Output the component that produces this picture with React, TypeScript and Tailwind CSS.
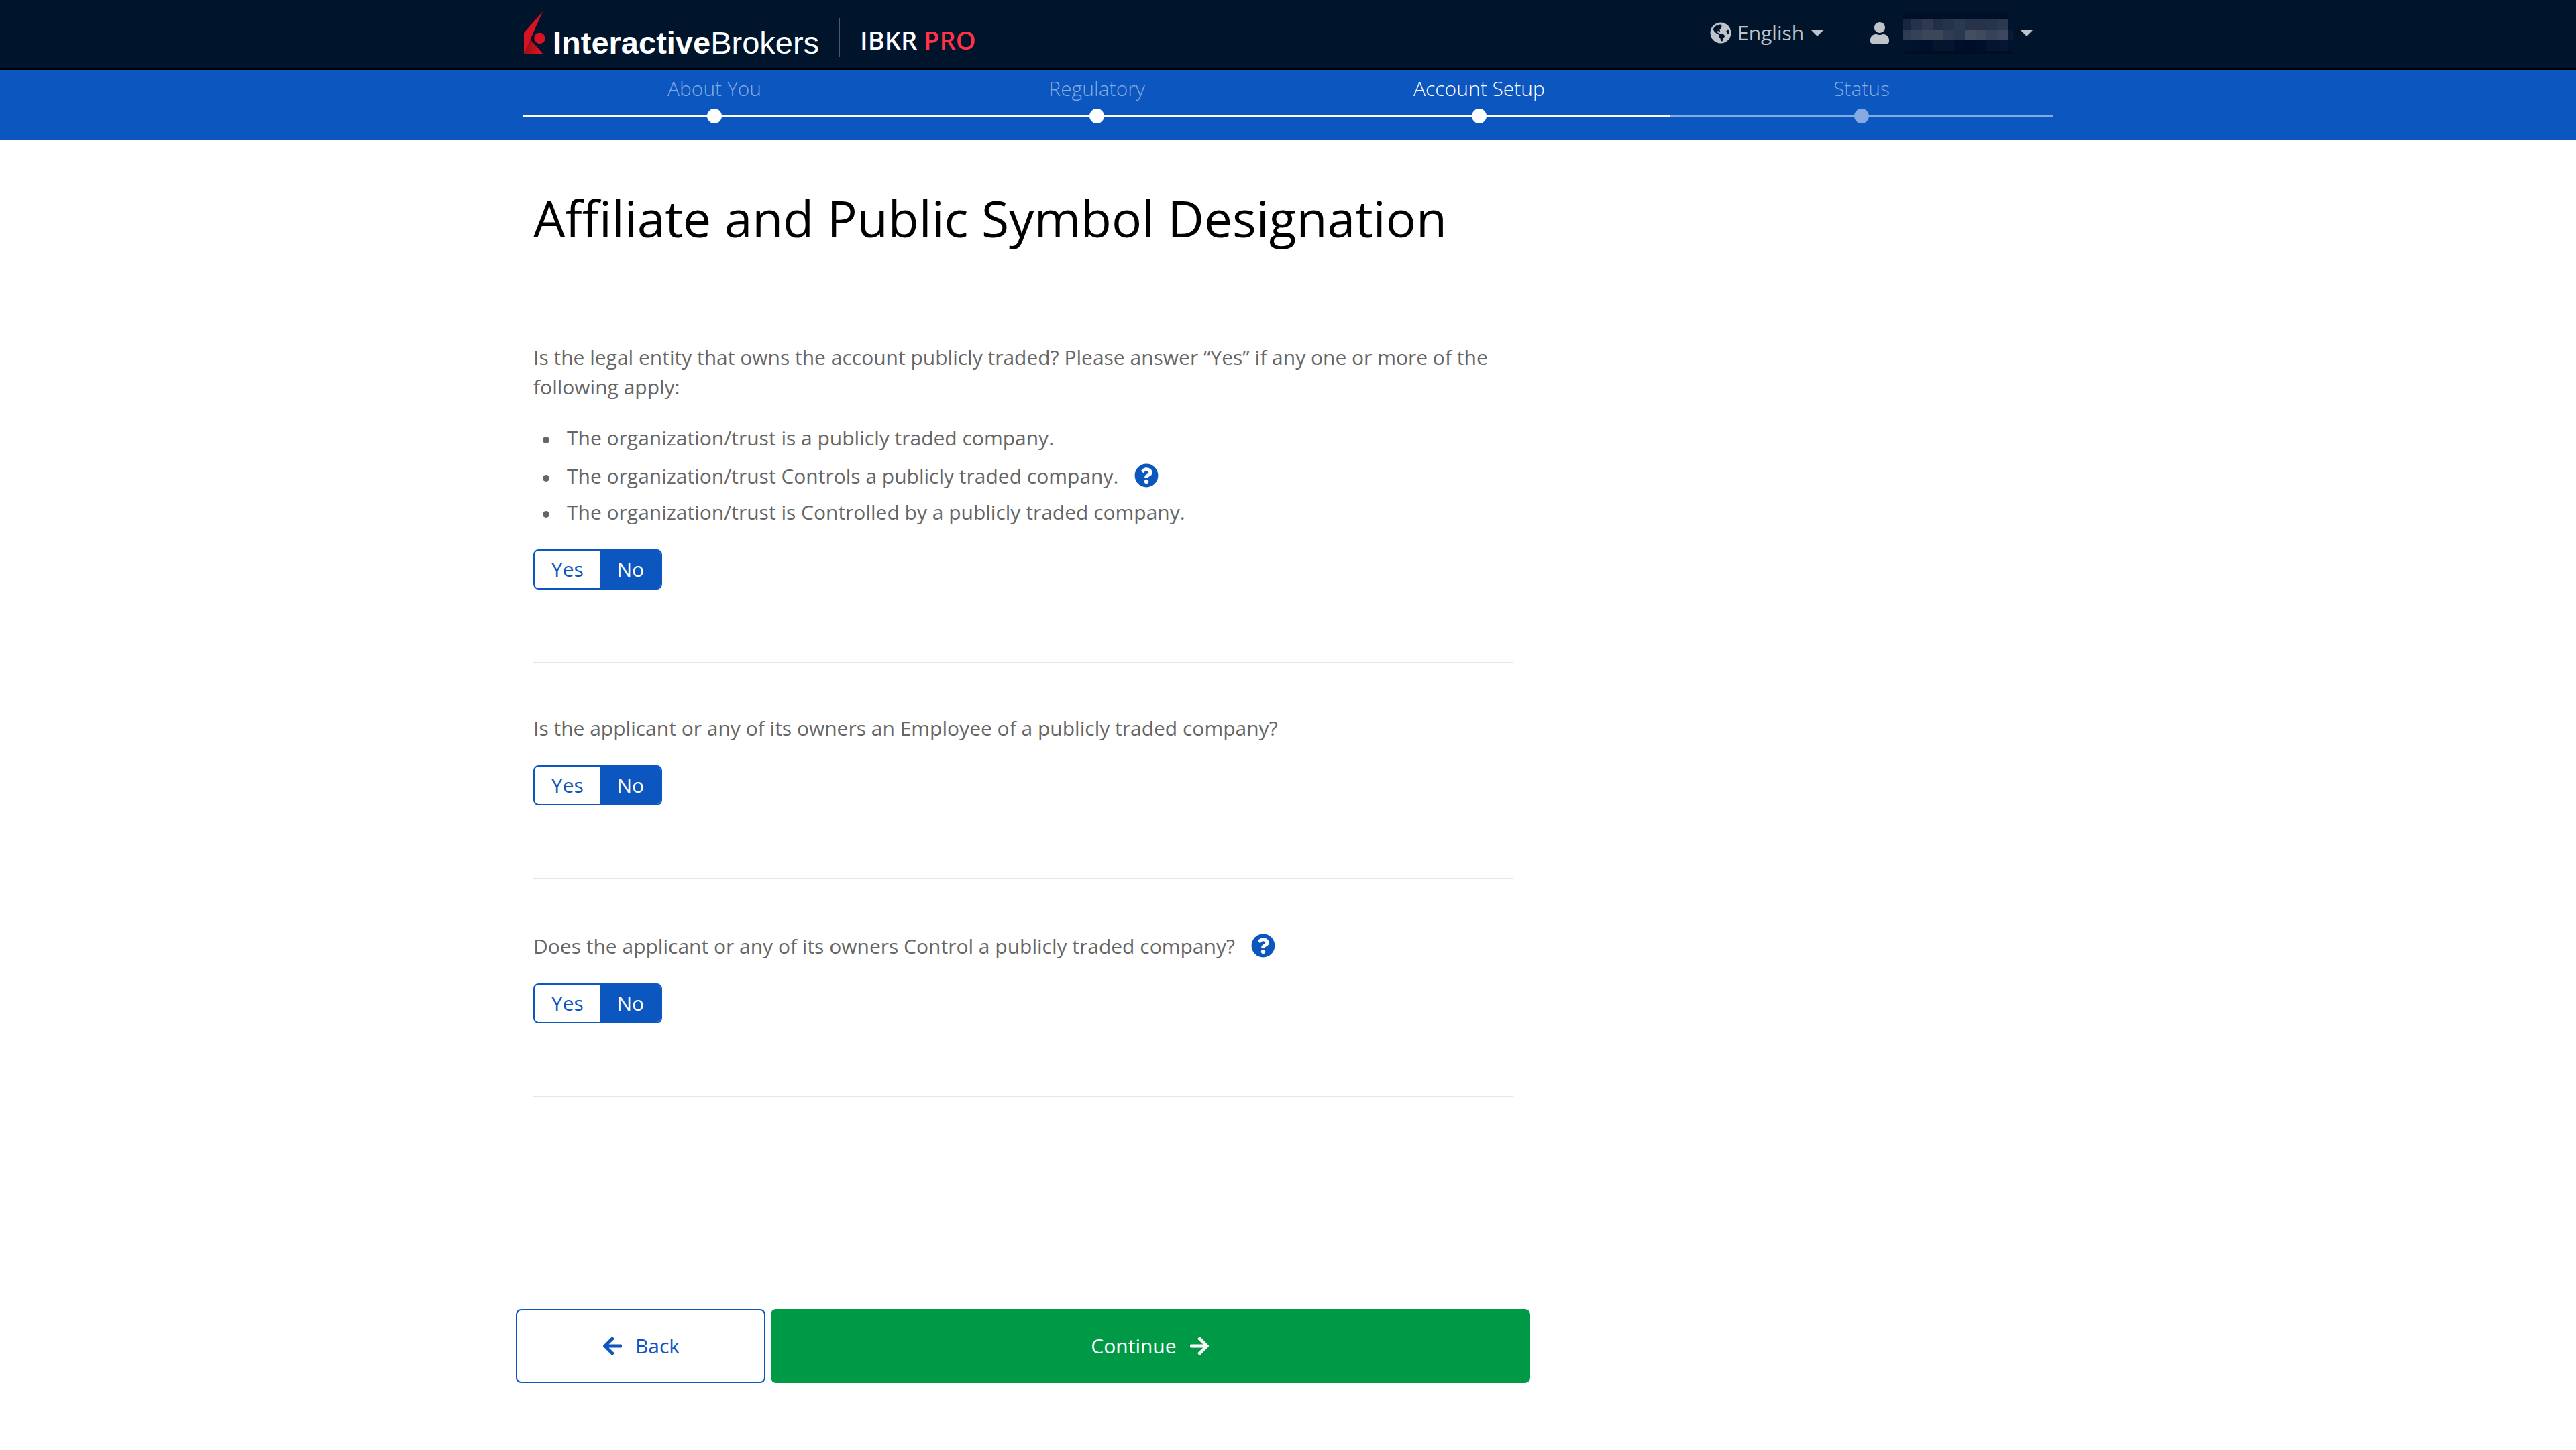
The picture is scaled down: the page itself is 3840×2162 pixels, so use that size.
import { useId, useState } from "react";
import { FaArrowLeft, FaArrowRight, FaGlobeAmericas, FaQuestionCircle, FaUser } from "react-icons/fa";

const steps = [
  { label: "About You", current: false, reached: true },
  { label: "Regulatory", current: false, reached: true },
  { label: "Account Setup", current: true, reached: true },
  { label: "Status", current: false, reached: false },
];

const maskColumns = [0, 12, 28, 44, 60, 76, 92, 108, 124, 140, 156, 164];
const maskRows = [
  { y: 10, h: 16, fills: ["#1a2640", "#24324a", "#2f3950", "#242d46", "#25344b", "#2a3a50", "#283249", "#28324a", "#26354b", "#2a394e", "#03142f"] },
  { y: 26, h: 16, fills: ["#303a51", "#344259", "#3a475b", "#3c4859", "#2f3c53", "#2a394f", "#434f60", "#3f4b5c", "#364259", "#3c465f", "#0a1a35"] },
  { y: 42, h: 16, fills: ["#01132f", "#00112e", "#00102c", "#04172f", "#04162f", "#00102c", "#000d2a", "#000f2c", "#041530", "#041631", "#01132e"] },
];

function MaskedName() {
  return (
    <svg className="h-[62px] w-[164px]" viewBox="0 0 164 62" shapeRendering="crispEdges" aria-hidden="true">
      <rect x="0" y="0" width="156" height="10" fill="#001029" />
      {maskRows.map((row) =>
        row.fills.map((fill, i) => (
          <rect key={`${row.y}-${i}`} x={maskColumns[i]} y={row.y} width={maskColumns[i + 1] - maskColumns[i]} height={row.h} fill={fill} />
        )),
      )}
      <rect x="0" y="58" width="164" height="4" fill="#000e1f" />
    </svg>
  );
}

function Caret() {
  return (
    <svg className="h-[9px] w-[18px] shrink-0" viewBox="0 0 18 9" aria-hidden="true">
      <path d="M0 0h18L9 9z" fill="#bfc4cb" />
    </svg>
  );
}

function LogoMark() {
  return (
    <svg className="h-[63px] w-[32px]" viewBox="0 0 32 63" aria-hidden="true">
      <defs>
        <linearGradient id="mark-shade" x1="0" y1="0.6" x2="0.75" y2="0.85">
          <stop offset="0" stopColor="#8e0f18" />
          <stop offset="1" stopColor="#d81222" />
        </linearGradient>
      </defs>
      <path d="M0 63 9 41 28 63z" fill="url(#mark-shade)" />
      <path d="M0 32 28 0 9 43 0 63z" fill="#d81222" />
      <circle cx="23.5" cy="40" r="8.3" fill="#d81222" />
    </svg>
  );
}

function Help({ label }: { label: string }) {
  return (
    <button type="button" aria-label={label} className="ml-6 flex h-[47px] shrink-0 items-center text-[#0c56c0]">
      <FaQuestionCircle className="size-9" />
    </button>
  );
}

function YesNo({ labelledBy }: { labelledBy: string }) {
  const [value, setValue] = useState("No");
  const name = useId();
  return (
    <div role="radiogroup" aria-labelledby={labelledBy} className="flex h-[60px] w-[192px] overflow-hidden rounded-lg border-2 border-[#0c56c0]">
      {["Yes", "No"].map((option) => (
        <label
          key={option}
          className="flex grow cursor-pointer items-center justify-center text-[#0c56c0] has-checked:bg-[#0c56c0] has-checked:text-white"
        >
          <input type="radio" name={name} value={option} checked={value === option} onChange={() => setValue(option)} className="sr-only" />
          {option}
        </label>
      ))}
    </div>
  );
}

const conditions = [
  { text: "The organization/trust is a publicly traded company.", help: false },
  { text: "The organization/trust Controls a publicly traded company.", help: true },
  { text: "The organization/trust is Controlled by a publicly traded company.", help: false },
];

export default function App() {
  return (
    <div className="min-h-screen bg-white font-['Open_Sans',sans-serif] text-[30px] leading-[44px] text-[#666666]">
      <header className="border-b-2 border-black bg-[#00142c]">
        <div className="mx-auto flex h-[102px] max-w-[2280px] items-start justify-between">
          <div className="flex items-start">
            <a href="#home" className="flex items-end gap-[11px] pt-[17px] pl-px">
              <LogoMark />
              <span className="font-['Liberation_Sans',sans-serif] text-[47px] leading-[32px] text-white">
                <b>Interactive</b>Brokers
              </span>
            </a>
            <span className="mt-[27px] ml-[29px] h-[58px] w-0.5 bg-[#4d5a6b]" />
            <span className="mt-[27px] ml-[30px] text-[38px] leading-[64px] font-semibold text-white">
              IBKR <span className="text-[#ff3347]">PRO</span>
            </span>
          </div>
          <div className="flex gap-[68px] pt-[27px] pr-[30px] text-[#bfc4cb]">
            <div className="flex items-center">
              <FaGlobeAmericas className="mr-[9px] size-8" aria-hidden="true" />
              <select aria-label="Language" className="mr-2.5 appearance-none bg-transparent leading-[44px]">
                <option>English</option>
              </select>
              <Caret />
            </div>
            <button type="button" aria-haspopup="menu" aria-label="Account menu" className="flex h-[44px] items-center">
              <FaUser className="mr-[19px] size-8" />
              <MaskedName />
              <span className="ml-[11px]">
                <Caret />
              </span>
            </button>
          </div>
        </div>
      </header>

      <nav aria-label="Progress" className="bg-[#0c56c0]">
        <ol className="mx-auto grid max-w-[2280px] grid-cols-4 pt-1.5 pb-6">
          {steps.map((step) => (
            <li key={step.label} aria-current={step.current ? "step" : undefined}>
              <p className={step.current ? "text-center font-light text-white" : "text-center font-light text-[#85aae0]"}>{step.label}</p>
              <div className={step.reached ? "mt-2 flex items-center text-white" : "mt-2 flex items-center text-[#85aae0]"}>
                <span className="h-1 grow bg-current" />
                <span className="size-[22px] rounded-full bg-current" />
                <span className="h-1 grow bg-current" />
              </div>
            </li>
          ))}
        </ol>
      </nav>

      <main className="mx-auto max-w-[2302px] pb-[100px]">
        <div className="max-w-[1512px]">
          <div className="px-[26px]">
            <h1 className="pt-[69px] text-[75px] leading-[96px] text-black">Affiliate and Public Symbol Designation</h1>

            <section className="border-b-2 border-[#e5e5e5] pt-[138px] pb-[108px]">
              <p id="q-entity">
                Is the legal entity that owns the account publicly traded? Please answer “Yes” if any one or more of the following apply:
              </p>
              <ul className="mt-8 flex flex-col gap-2.5 pl-3.5">
                {conditions.map((c) => (
                  <li key={c.text} className="flex items-end">
                    <span className="mr-[26px] mb-3.5 size-2.5 rounded-full bg-[#666666]" />
                    {c.text}
                    {c.help && <Help label="What does Controls mean?" />}
                  </li>
                ))}
              </ul>
              <div className="mt-[33px]">
                <YesNo labelledBy="q-entity" />
              </div>
            </section>

            <section className="border-b-2 border-[#e5e5e5] pt-[75px] pb-[108px]">
              <p id="q-employee">Is the applicant or any of its owners an Employee of a publicly traded company?</p>
              <div className="mt-[33px]">
                <YesNo labelledBy="q-employee" />
              </div>
            </section>

            <section className="border-b-2 border-[#e5e5e5] pt-[75px] pb-[108px]">
              <div className="flex items-end">
                <p id="q-control">Does the applicant or any of its owners Control a publicly traded company?</p>
                <Help label="What does Control mean?" />
              </div>
              <div className="mt-[33px]">
                <YesNo labelledBy="q-control" />
              </div>
            </section>
          </div>

          <div className="mt-[316px] flex gap-2">
            <button type="button" className="flex h-[110px] w-[372px] items-center justify-center gap-[18px] rounded-lg border-2 border-[#0c56c0] bg-white text-[#0c56c0]">
              <FaArrowLeft className="size-8" />
              Back
            </button>
            <button type="button" className="flex h-[110px] grow items-center justify-center gap-[18px] rounded-lg bg-[#009a47] text-white">
              Continue
              <FaArrowRight className="size-8" />
            </button>
          </div>
        </div>
      </main>
    </div>
  );
}
